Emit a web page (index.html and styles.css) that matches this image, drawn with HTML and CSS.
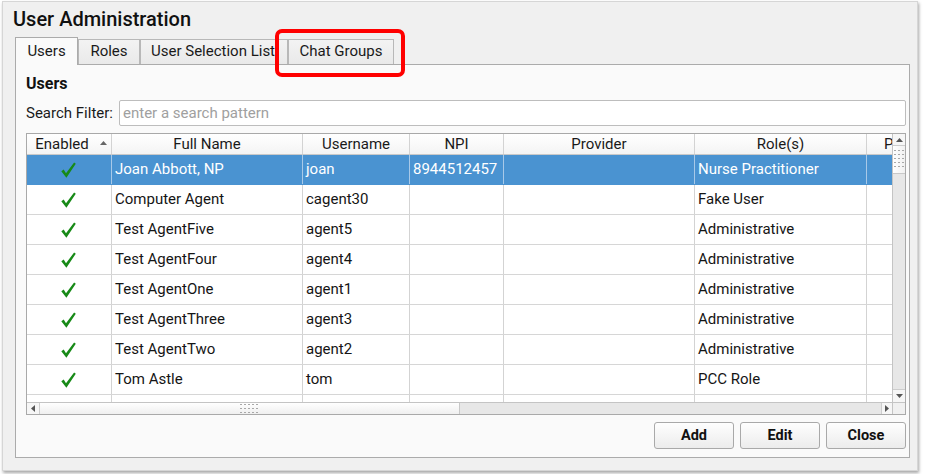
FILE: index.html
```html
<!DOCTYPE html>
<html>
<head>
<meta charset="utf-8">
<link rel="stylesheet" href="styles.css">
</head>
<body>
<svg width="0" height="0" class="defs">
  <defs>
    <symbol id="check" viewBox="0 0 15 16">
      <path d="M0.3 9.2 L2.7 7.5 L5 11.2 L13.1 0.5 L14.8 1.7 L5.4 15.7 Z" fill="#178a17"/>
    </symbol>
    <pattern id="dots" width="4" height="4" patternUnits="userSpaceOnUse">
      <rect x="0" y="0" width="2" height="1" fill="#a8a8a8"/>
    </pattern>
  </defs>
</svg>
<div class="window">
  <div class="title">User Administration</div>
  <div class="tabs">
    <div class="tab tab-users active">Users</div>
    <div class="tab tab-roles">Roles</div>
    <div class="tab tab-usl">User Selection List</div>
    <div class="tab tab-chat">Chat Groups</div>
  </div>
  <div class="panel">
    <div class="heading">Users</div>
    <div class="search">
      <span class="search-label">Search Filter:</span>
      <input class="search-input" type="text" placeholder="enter a search pattern">
    </div>
    <div class="grid">
      <div class="viewport">
        <div class="hrow">
          <div class="cell c1 hcell"><span>Enabled</span><svg class="sort" width="7" height="4" viewBox="0 0 7 4"><path d="M0 4 L3.5 0 L7 4 Z" fill="#666"/></svg></div>
          <div class="cell c2 hcell">Full Name</div>
          <div class="cell c3 hcell">Username</div>
          <div class="cell c4 hcell">NPI</div>
          <div class="cell c5 hcell">Provider</div>
          <div class="cell c6 hcell">Role(s)</div>
          <div class="cell c7 hcell hcell-p">P</div>
        </div>
        <div class="row selected">
          <div class="cell c1 chk"><svg width="15" height="16"><use href="#check"/></svg></div>
          <div class="cell c2">Joan Abbott, NP</div>
          <div class="cell c3">joan</div>
          <div class="cell c4">8944512457</div>
          <div class="cell c5"></div>
          <div class="cell c6">Nurse Practitioner</div>
          <div class="cell c7"></div>
        </div>
        <div class="row">
          <div class="cell c1 chk"><svg width="15" height="16"><use href="#check"/></svg></div>
          <div class="cell c2">Computer Agent</div>
          <div class="cell c3">cagent30</div>
          <div class="cell c4"></div>
          <div class="cell c5"></div>
          <div class="cell c6">Fake User</div>
          <div class="cell c7"></div>
        </div>
        <div class="row">
          <div class="cell c1 chk"><svg width="15" height="16"><use href="#check"/></svg></div>
          <div class="cell c2">Test AgentFive</div>
          <div class="cell c3">agent5</div>
          <div class="cell c4"></div>
          <div class="cell c5"></div>
          <div class="cell c6">Administrative</div>
          <div class="cell c7"></div>
        </div>
        <div class="row">
          <div class="cell c1 chk"><svg width="15" height="16"><use href="#check"/></svg></div>
          <div class="cell c2">Test AgentFour</div>
          <div class="cell c3">agent4</div>
          <div class="cell c4"></div>
          <div class="cell c5"></div>
          <div class="cell c6">Administrative</div>
          <div class="cell c7"></div>
        </div>
        <div class="row">
          <div class="cell c1 chk"><svg width="15" height="16"><use href="#check"/></svg></div>
          <div class="cell c2">Test AgentOne</div>
          <div class="cell c3">agent1</div>
          <div class="cell c4"></div>
          <div class="cell c5"></div>
          <div class="cell c6">Administrative</div>
          <div class="cell c7"></div>
        </div>
        <div class="row">
          <div class="cell c1 chk"><svg width="15" height="16"><use href="#check"/></svg></div>
          <div class="cell c2">Test AgentThree</div>
          <div class="cell c3">agent3</div>
          <div class="cell c4"></div>
          <div class="cell c5"></div>
          <div class="cell c6">Administrative</div>
          <div class="cell c7"></div>
        </div>
        <div class="row">
          <div class="cell c1 chk"><svg width="15" height="16"><use href="#check"/></svg></div>
          <div class="cell c2">Test AgentTwo</div>
          <div class="cell c3">agent2</div>
          <div class="cell c4"></div>
          <div class="cell c5"></div>
          <div class="cell c6">Administrative</div>
          <div class="cell c7"></div>
        </div>
        <div class="row">
          <div class="cell c1 chk"><svg width="15" height="16"><use href="#check"/></svg></div>
          <div class="cell c2">Tom Astle</div>
          <div class="cell c3">tom</div>
          <div class="cell c4"></div>
          <div class="cell c5"></div>
          <div class="cell c6">PCC Role</div>
          <div class="cell c7"></div>
        </div>
        <div class="row">
          <div class="cell c1 chk"><svg width="15" height="16"><use href="#check"/></svg></div>
          <div class="cell c2"></div>
          <div class="cell c3"></div>
          <div class="cell c4"></div>
          <div class="cell c5"></div>
          <div class="cell c6"></div>
          <div class="cell c7"></div>
        </div>
      </div>
      <div class="vscroll">
        <div class="vbtn vup"><svg width="7" height="4" viewBox="0 0 7 4"><path d="M0 4 L3.5 0 L7 4 Z" fill="#555"/></svg></div>
        <div class="vthumb"><svg width="11" height="19"><rect x="0" y="0" width="11" height="19" fill="url(#dots)"/></svg></div>
        <div class="vtrack"></div>
        <div class="vbtn vdown"><svg width="7" height="4" viewBox="0 0 7 4"><path d="M0 0 L7 0 L3.5 4 Z" fill="#555"/></svg></div>
      </div>
      <div class="hscroll">
        <div class="hbtn hleft"><svg width="4" height="7" viewBox="0 0 4 7"><path d="M4 0 L4 7 L0 3.5 Z" fill="#555"/></svg></div>
        <div class="hthumb"><svg width="20" height="9"><rect x="0" y="0" width="20" height="9" fill="url(#dots)"/></svg></div>
        <div class="htrack"></div>
        <div class="hbtn hright"><svg width="4" height="7" viewBox="0 0 4 7"><path d="M0 0 L4 3.5 L0 7 Z" fill="#555"/></svg></div>
      </div>
      <div class="corner"></div>
    </div>
    <div class="buttons">
      <div class="btn">Add</div>
      <div class="btn">Edit</div>
      <div class="btn">Close</div>
    </div>
  </div>
  <div class="annotation"></div>
</div>
</body>
</html>
```
FILE: styles.css
```css
* { box-sizing: border-box; }
html, body { margin: 0; padding: 0; }
body {
  background: #ffffff;
  font-family: Roboto, "Liberation Sans", sans-serif;
  color: #151515;
  width: 930px;
  height: 474px;
  overflow: hidden;
}
.defs { position: absolute; width: 0; height: 0; }

.window {
  position: relative;
  margin: 1px 0 0 2px;
  width: 916px;
  height: 470px;
  background: #f0f0f0;
  border: 1px solid #d6d6d6;
  box-shadow: 1px 2px 3px rgba(0,0,0,0.35);
  padding: 0 7px 12px 12px;
  display: flex;
  flex-direction: column;
}

.title {
  height: 35px;
  line-height: 35px;
  font-size: 20px;
  font-weight: 500;
  margin-left: -2px;
  color: #111;
}

.tabs {
  display: flex;
  align-items: flex-end;
  height: 27px;
}
.tab {
  height: 25px;
  line-height: 23px;
  font-size: 15px;
  text-align: center;
  border: 1px solid #b8b8b8;
  border-bottom: none;
  background: linear-gradient(#f3f3f3, #e9e9e9);
  color: #1a1a1a;
  white-space: nowrap;
  overflow: hidden;
}
.tab.active {
  height: 28px;
  line-height: 26px;
  margin-bottom: -1px;
  background: #fafafa;
  border-color: #ababab;
  position: relative;
  z-index: 1;
}
.tab-users { width: 63px; }
.tab-roles { width: 62px; }
.tab-usl { width: 148px; text-align: left; padding-left: 10px; }
.tab-chat { width: 106px; }

.panel {
  height: 394px;
  border: 1px solid #ababab;
  background: #fafafa;
  padding: 9px 3px 8px 10px;
  display: flex;
  flex-direction: column;
}
.heading {
  height: 20px;
  line-height: 20px;
  font-size: 16px;
  font-weight: 700;
  color: #111;
}
.search {
  margin-top: 6px;
  height: 26px;
  display: flex;
  align-items: center;
}
.search-label {
  font-size: 15px;
  width: 93px;
  flex: none;
  color: #1a1a1a;
}
.search-input {
  flex: 1;
  height: 26px;
  margin: 0;
  border: 1px solid #bdbdbd;
  border-radius: 2px;
  background: #fff;
  padding: 0 0 0 3px;
  font-family: Roboto, "Liberation Sans", sans-serif;
  font-size: 15px;
  outline: none;
}
.search-input::placeholder { color: #a0a0a0; }

.grid {
  margin-top: 7px;
  height: 282px;
  border: 1px solid #a9a9a9;
  background: #fff;
  display: grid;
  grid-template-columns: 1fr 13px;
  grid-template-rows: 1fr 12px;
}
.viewport {
  overflow: hidden;
  min-width: 0;
  min-height: 0;
}
.hrow, .row {
  display: flex;
  flex-wrap: nowrap;
}
.hrow {
  height: 21px;
  border-bottom: 1px solid #c9c9c9;
  background: linear-gradient(#ffffff, #f4f4f4);
}
.row {
  height: 30px;
  border-bottom: 1px solid #d6d6d6;
}
.cell {
  flex: none;
  border-right: 1px solid #d3d3d3;
  white-space: nowrap;
  overflow: hidden;
  font-size: 15px;
  padding-left: 3px;
  line-height: 29px;
}
.hcell {
  line-height: 20px;
  text-align: center;
  padding-left: 0;
  color: #1a1a1a;
}
.hcell-p { text-align: left; padding-left: 17px; }
.c1 { width: 85px; }
.c2 { width: 191px; }
.c3 { width: 107px; }
.c4 { width: 94px; }
.c5 { width: 191px; }
.c6 { width: 172px; }
.c7 { width: 76px; }
.hcell.c1 {
  display: flex;
  align-items: center;
  justify-content: center;
  gap: 11px;
  padding-left: 4px;
}
.sort { flex: none; margin-top: -3px; }
.chk {
  display: flex;
  align-items: center;
  justify-content: center;
  padding-left: 0;
}
.chk svg { display: block; margin-left: -2px; }
.row.selected {
  background: #4a93d1;
  color: #fff;
  border-bottom-color: #4a93d1;
}
.row.selected .cell { border-right-color: #a8c9e8; }

.vscroll {
  border-left: 1px solid #c4c4c4;
  background: #e7e7e7;
  display: flex;
  flex-direction: column;
}
.vbtn {
  flex: none;
  background: #f6f6f6;
  display: flex;
  align-items: center;
  justify-content: center;
}
.vup { height: 12px; border-bottom: 1px solid #cdcdcd; }
.vdown { height: 13px; border-top: 1px solid #cdcdcd; }
.vthumb {
  flex: none;
  height: 28px;
  background: linear-gradient(90deg, #ffffff, #f1f1f1);
  border-bottom: 1px solid #c8c8c8;
  display: flex;
  align-items: center;
  justify-content: center;
}
.vthumb svg, .hthumb svg { display: block; }
.vtrack { flex: 1; }

.hscroll {
  border-top: 1px solid #c4c4c4;
  background: #e7e7e7;
  display: flex;
}
.hbtn {
  flex: none;
  background: #f6f6f6;
  display: flex;
  align-items: center;
  justify-content: center;
}
.hleft { width: 13px; border-right: 1px solid #cdcdcd; }
.hright { width: 11px; border-left: 1px solid #cdcdcd; }
.hthumb {
  flex: none;
  width: 420px;
  background: linear-gradient(#ffffff, #efefef);
  border-right: 1px solid #c8c8c8;
  display: flex;
  align-items: center;
  justify-content: center;
}
.htrack { flex: 1; }
.corner {
  background: #f0f0f0;
  border-top: 1px solid #c4c4c4;
  border-left: 1px solid #c4c4c4;
}

.buttons {
  margin-top: 7px;
  height: 27px;
  display: flex;
  justify-content: flex-end;
  gap: 6px;
}
.btn {
  width: 80px;
  height: 27px;
  line-height: 25px;
  border: 1px solid #a9a9a9;
  border-radius: 3px;
  background: linear-gradient(#fefefe, #ececec);
  text-align: center;
  font-size: 14.5px;
  font-weight: 700;
  color: #111;
}

.annotation {
  position: absolute;
  left: 272px;
  top: 27px;
  width: 130px;
  height: 48px;
  border: 4px solid #ff0000;
  border-radius: 7px;
  z-index: 5;
}
```
